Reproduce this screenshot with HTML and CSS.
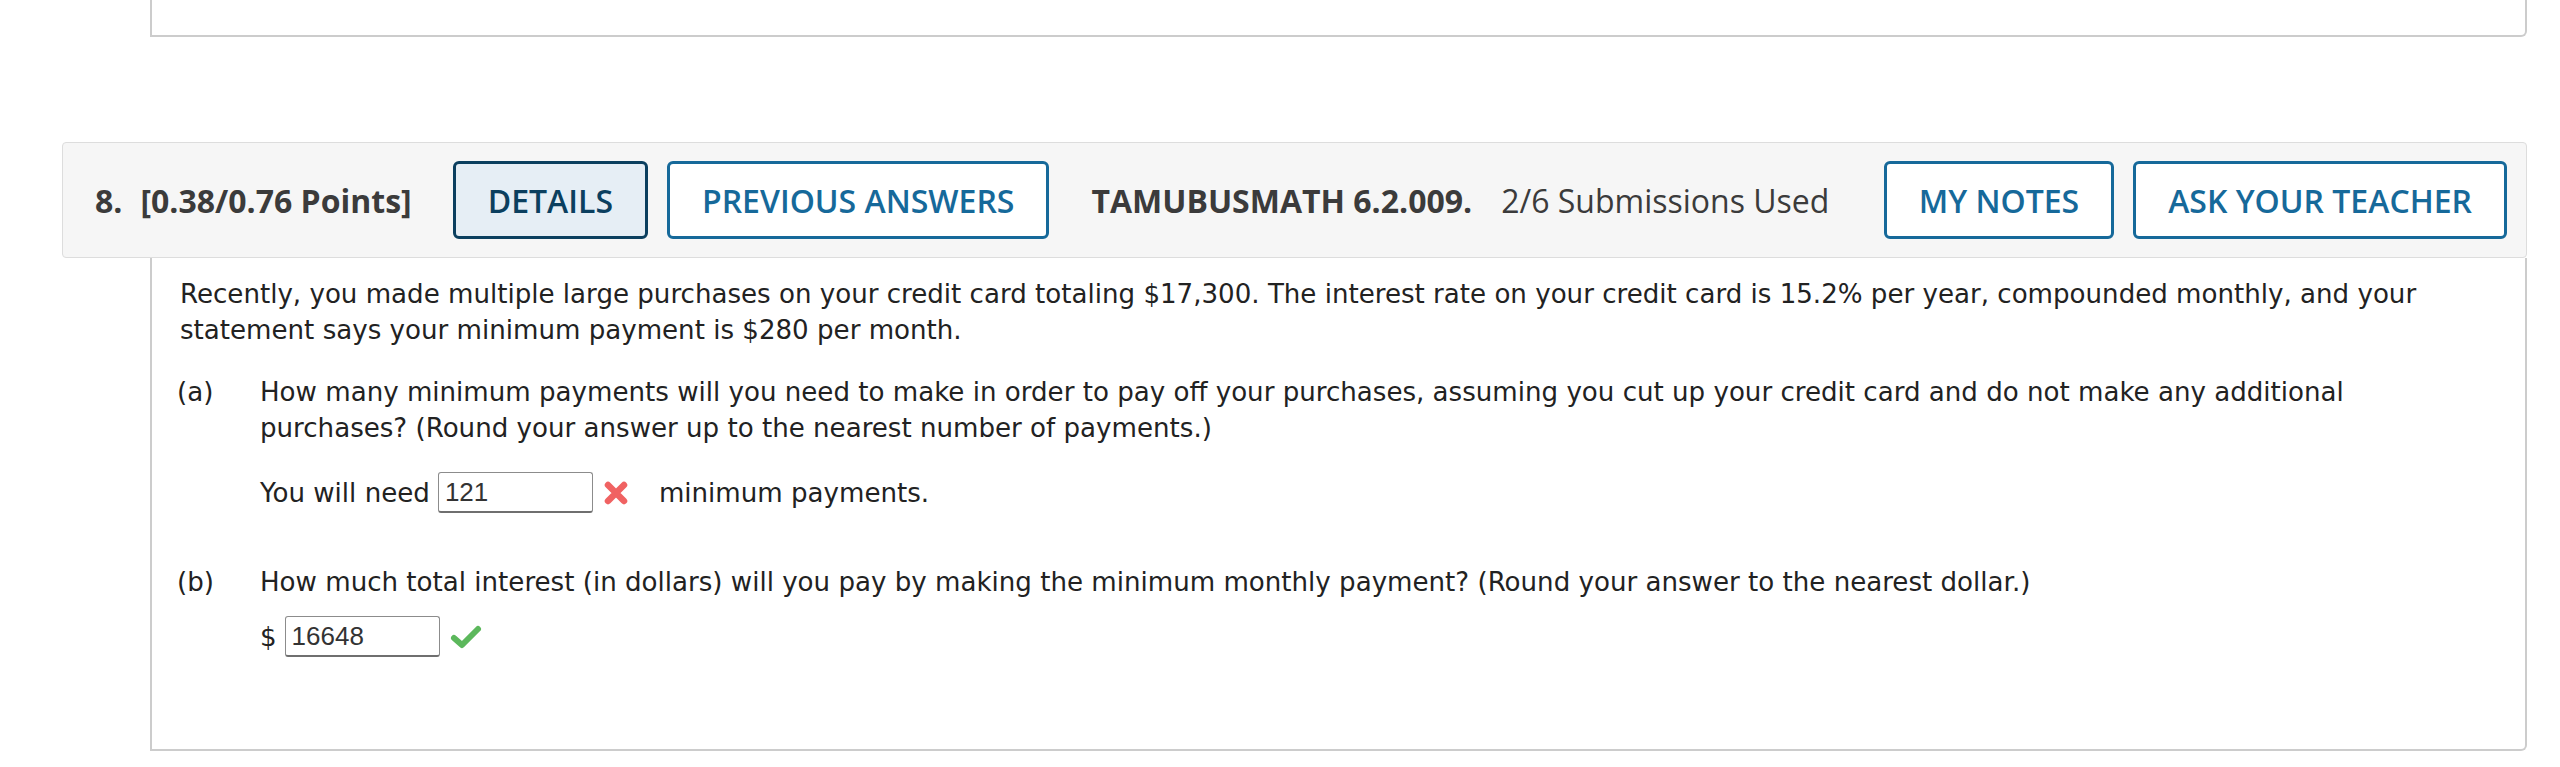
FILE: index.html
```html
<!DOCTYPE html>
<html>
<head>
<meta charset="utf-8">
<link rel="stylesheet" href="styles.css">
</head>
<body>
<div class="page">
  <div class="prev-card"></div>
  <div class="question">
    <div class="q-header">
      <span class="q-num">8.</span>
      <span class="q-points">[0.38/0.76 Points]</span>
      <div class="btn-group">
        <button class="btn btn-active">DETAILS</button>
        <button class="btn">PREVIOUS ANSWERS</button>
      </div>
      <span class="q-code">TAMUBUSMATH 6.2.009.</span>
      <span class="q-subs">2/6 Submissions Used</span>
      <div class="btn-group btn-group-right">
        <button class="btn">MY NOTES</button>
        <button class="btn">ASK YOUR TEACHER</button>
      </div>
    </div>
    <div class="q-body">
      <p class="q-text">Recently, you made multiple large purchases on your credit card totaling $17,300. The interest rate on your credit card is 15.2% per year, compounded monthly, and your statement says your minimum payment is $280 per month.</p>
      <div class="part part-a">
        <div class="part-label">(a)</div>
        <div class="part-content">
          <p class="part-text">How many minimum payments will you need to make in order to pay off your purchases, assuming you cut up your credit card and do not make any additional purchases? (Round your answer up to the nearest number of payments.)</p>
          <div class="answer-row">
            <span>You will need</span>
            <input class="answer" type="text" value="121">
            <svg class="mark mark-x" width="28" height="24" viewBox="0 0 28 24"><path d="M6 4 L22 20 M22 4 L6 20" stroke="#f06262" stroke-width="6.5" stroke-linecap="round" fill="none"/></svg>
            <span class="after-mark">minimum payments.</span>
          </div>
        </div>
      </div>
      <div class="part part-b">
        <div class="part-label">(b)</div>
        <div class="part-content">
          <p class="part-text">How much total interest (in dollars) will you pay by making the minimum monthly payment? (Round your answer to the nearest dollar.)</p>
          <div class="answer-row answer-row-b">
            <span>$</span>
            <input class="answer" type="text" value="16648">
            <svg class="mark mark-check" width="34" height="26" viewBox="0 0 34 26"><path d="M5 14 L13 21 L29 5" stroke="#5cb85c" stroke-width="6" stroke-linecap="round" stroke-linejoin="round" fill="none"/></svg>
          </div>
        </div>
      </div>
    </div>
  </div>
</div>
</body>
</html>
```

FILE: styles.css
```css
html, body {
  margin: 0;
  padding: 0;
  background: #ffffff;
}

.page {
  padding-left: 62px;
  width: 2465px;
}

.prev-card {
  margin-left: 88px;
  height: 35px;
  border: 2px solid #cccccc;
  border-top: none;
  border-radius: 0 0 6px 0;
  background: #ffffff;
}

.question {
  margin-top: 105px;
}

.q-header {
  display: flex;
  align-items: center;
  height: 116px;
  box-sizing: border-box;
  padding: 0 19px 0 32px;
  background: #f6f6f6;
  border: 1px solid #dddddd;
  border-radius: 4px;
  font-family: "Open Sans", "Liberation Sans", sans-serif;
  font-size: 32px;
  color: #3b3b3b;
}

.q-num {
  font-weight: 700;
  margin-right: 18px;
}

.q-points {
  font-weight: 700;
  margin-right: 41px;
}

.btn-group {
  display: flex;
  gap: 19px;
}

.btn-group-right {
  margin-left: auto;
}

.btn {
  height: 78px;
  box-sizing: border-box;
  padding: 0 32px;
  background: #ffffff;
  border: 3px solid #16699a;
  border-radius: 6px;
  color: #16699a;
  font-family: "Open Sans", "Liberation Sans", sans-serif;
  font-size: 32px;
  font-weight: 600;
}

.btn-active {
  background: #e6eef5;
  border-color: #0b3f5f;
  color: #0b3f5f;
}

.q-code {
  font-weight: 700;
  margin-left: 42px;
  margin-right: 29px;
}

.q-subs {
  font-weight: 400;
}

.q-body {
  margin-left: 88px;
  height: 493px;
  box-sizing: border-box;
  padding: 18px 56px 0 28px;
  border: 2px solid #cccccc;
  border-top: none;
  border-radius: 0 0 6px 0;
  font-family: "DejaVu Sans", Verdana, sans-serif;
  font-size: 26.1px;
  line-height: 36px;
  color: #222222;
}

.q-text {
  margin: 0;
}

.part {
  display: flex;
}

.part-a {
  margin-top: 26px;
}

.part-b {
  margin-top: 51px;
}

.part-label {
  width: 83px;
  flex: none;
  margin-left: -3px;
}

.part-content {
  flex: 1;
}

.part-text {
  margin: 0;
}

.answer-row {
  display: flex;
  align-items: center;
  margin-top: 26px;
  height: 41px;
}

.answer-row-b {
  margin-top: 16px;
}

.answer {
  width: 155px;
  height: 41px;
  box-sizing: border-box;
  margin: 0 0 0 8px;
  padding: 0 6px;
  border: 1px solid #8c8c8c;
  border-bottom: 2px solid #6f6f6f;
  border-radius: 3px;
  font-family: "Liberation Sans", Arial, sans-serif;
  font-size: 26px;
  color: #333333;
  background: #ffffff;
}

.mark {
  flex: none;
  margin-left: 9px;
}

.after-mark {
  margin-left: 29px;
}
```
